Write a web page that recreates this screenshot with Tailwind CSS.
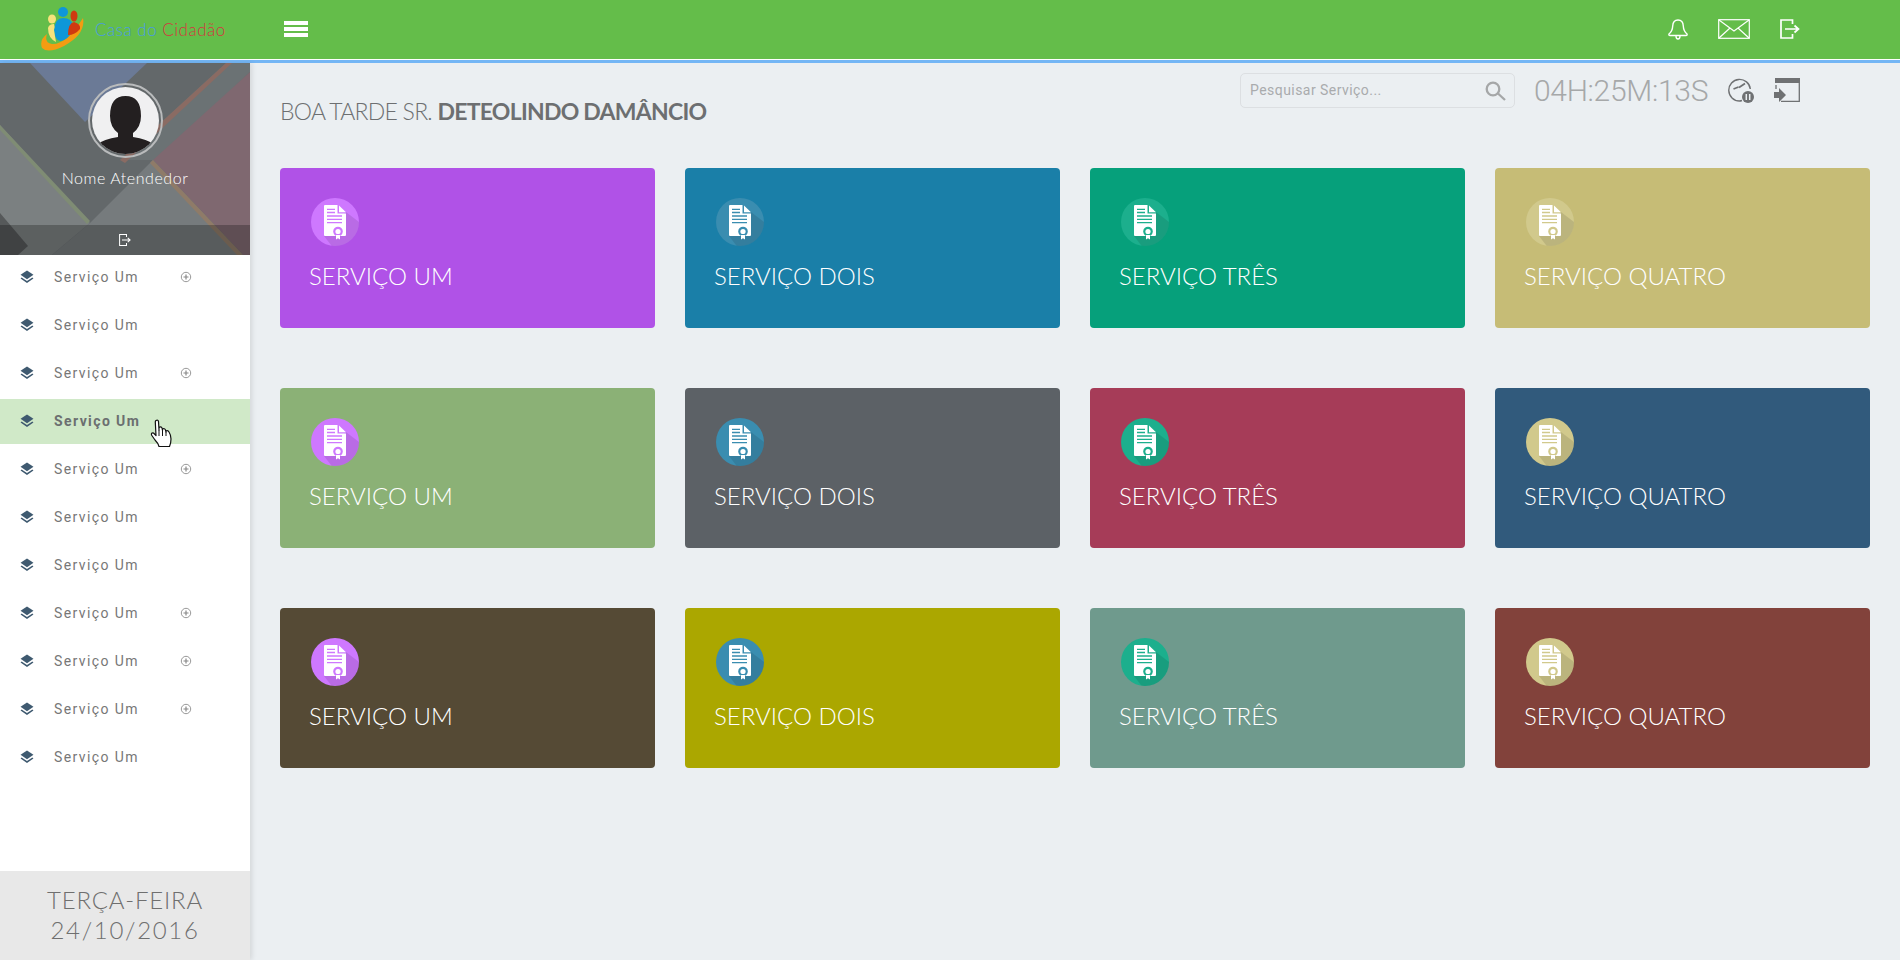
<!DOCTYPE html>
<html lang="pt-BR">
<head>
<meta charset="UTF-8">
<title>Casa do Cidadão</title>
<script src="https://cdn.jsdelivr.net/npm/@tailwindcss/browser@4"></script>
</head>
<body class="h-screen overflow-hidden bg-[#ebeff2] font-['Lato',sans-serif] text-[#6d6f71]">

<!-- symbols -->
<svg class="absolute w-0 h-0">
  <defs>
    <clipPath id="circle-clip"><circle cx="24" cy="24" r="24"/></clipPath>
  </defs>
  <symbol id="doc" viewBox="0 0 48 48">
    <circle cx="24" cy="24" r="24" fill="currentColor"/>
    <path clip-path="url(#circle-clip)" d="M35 14 L60 33 V60 H30 L13 38 Z" fill="#000" fill-opacity=".1"/>
    <path d="M14 7 H26.500 V15.500 H35 V37 Q35 38 34 38 H14 Q13 38 13 37 V8 Q13 7 14 7 Z" fill="#fff"/>
    <path d="M28 7.500 L35 14.300 H28 Z" fill="#fff"/>
    <path d="M16 11.300 H24 M16 14.500 H24 M16 18 H31 M16 21.300 H31 M16 24.700 H31" stroke="currentColor" stroke-width="1.300"/>
    <circle cx="27" cy="33.500" r="4.800" fill="currentColor"/>
    <circle cx="27" cy="33.500" r="2.600" fill="#fff"/>
    <path d="M25 37 H29 V41.500 L27 40.300 L25 41.500 Z" fill="#fff"/>
  </symbol>
  <symbol id="layers" viewBox="0.5 0.5 13 13">
    <path d="M7 1 L13 5 L7 9 L1 5 Z" fill="#3f5a70"/>
    <path d="M2 7.500 L1 8.300 L7 12.500 L13 8.300 L12 7.500 L7 10.800 Z" fill="#3f5a70"/>
  </symbol>
  <symbol id="plus" viewBox="0 0 12 12">
    <circle cx="6" cy="6" r="4.700" fill="none" stroke="#999" stroke-width="1"/>
    <path d="M3.500 6 H8.500 M6 3.500 V8.500" stroke="#888" stroke-width="1.200"/>
  </symbol>
  <symbol id="logout" viewBox="0 0 20 20">
    <path d="M12.500 5 V1 H1 V19 H12.500 V15" fill="none" stroke="currentColor" stroke-width="1.700"/>
    <path d="M5 10 H18 M14.500 6.500 L18.500 10 L14.500 13.500" fill="none" stroke="currentColor" stroke-width="1.700"/>
  </symbol>
</svg>

<!-- top bar -->
<header class="h-[63px] bg-[#64bd4a] border-b-[3px] border-[#74b6f5] shadow-[inset_0_-1px_0_#fff] flex items-center pb-[2px]">
  <div class="w-[284px] pl-[40px] flex items-center shrink-0">
    <svg class="w-[45px] h-[46px] shrink-0" viewBox="0 0 45 46">
      <path d="M43 12 Q46 28 24 40 Q8 48 2 42 Q-1 34 7 28 Q4 37 12 38 Q26 39 43 12 Z" fill="#f39c12"/>
      <circle cx="23" cy="6" r="5" fill="#0e97d8"/>
      <path d="M14 24 Q15 12 23 12 Q32 12 33 20 Q32 30 24 34 Q15 38 14 24 Z" fill="#0e97d8"/>
      <ellipse cx="12" cy="13" rx="4" ry="4.500" fill="#f7e27c"/>
      <path d="M8 22 Q9 18 14 18 Q15 20 14 24 L16 36 Q8 32 8 22 Z" fill="#f7e27c"/>
      <ellipse cx="34" cy="10" rx="3.500" ry="5.500" fill="#cf3a10"/>
      <path d="M28 29 Q28 17 34 16 Q41 18 40 23 Q35 29 28 29 Z" fill="#cf3a10"/>
    </svg>
    <span class="ml-[10px] text-[17px] leading-none font-light tracking-[.5px] whitespace-nowrap"><span class="text-[#4a9ae0]">Casa do</span> <span class="text-[#d5343f]">Cidadão</span></span>
  </div>
  <div class="w-[24px] flex flex-col gap-[2px]">
    <div class="h-[4px] bg-white"></div>
    <div class="h-[4px] bg-white"></div>
    <div class="h-[4px] bg-white"></div>
  </div>
  <div class="ml-auto mr-[100px] flex items-center gap-[30px] text-white">
    <svg class="w-[20px] h-[21px]" viewBox="0 0 20 21" fill="none" stroke="currentColor" stroke-width="1.400">
      <path d="M10 1 Q15 1 15.300 7 Q15.500 12 19 15 Q19.500 16.500 18 16.500 H2 Q.5 16.500 1 15 Q4.500 12 4.700 7 Q5 1 10 1 Z"/>
      <path d="M8 17 Q8 20 10 20 Q12 20 12 17"/>
    </svg>
    <svg class="w-[32px] h-[20px]" viewBox="0 0 32 20" fill="none" stroke="currentColor" stroke-width="1.200">
      <rect x=".7" y=".7" width="30.600" height="18.600"/>
      <path d="M1 1 L16 12 L31 1 M1 19 L12 9 M31 19 L20 9"/>
    </svg>
    <svg class="w-[20px] h-[20px]"><use href="#logout"/></svg>
  </div>
</header>

<div class="flex h-[897px]">
  <!-- sidebar -->
  <aside class="relative w-[250px] shrink-0 bg-white flex flex-col shadow-[2px_0_5px_rgba(0,0,0,.1)]">
    <div class="relative h-[192px] overflow-hidden">
      <svg class="absolute inset-0 w-[250px] h-[192px]" viewBox="0 0 250 192">
        <rect width="250" height="192" fill="#63686a"/>
        <path d="M30 0 H147 L85 59 Z" fill="#6b7a96"/>
        <path d="M226 0 H250 V9 L158 97 L120 97 Z" fill="#6b7274"/>
        <path d="M226 0 L120 97 L125 100 L232 0 Z" fill="#8a6b63"/>
        <path d="M250 9 V192 H243 L153 97 Z" fill="#7f6870"/>
        <path d="M0 62 L90 160 L52 192 H0 Z" fill="#7b8081"/>
        <path d="M90 160 L153 97 L243 192 H52 Z" fill="#767b7d"/>
        <path d="M0 62 L90 158 L87 161 L0 67 Z" fill="#7f8c74"/>
        <path d="M153 97 L243 192 H237 L150 100 Z" fill="#8f7b68"/>
        <path d="M0 150 L28 183 L18 192 H0 Z" fill="#56595a"/>
      </svg>
      <div class="relative flex flex-col items-center pt-[20px]">
        <div class="w-[75px] h-[75px] rounded-full border-[2px] border-[#b9bbbc] p-[2px]">
          <svg class="w-full h-full rounded-full" viewBox="0 0 67 67">
            <rect width="67" height="67" fill="#f0f0f1"/>
            <path d="M33.500 9 Q49 9 49 29 Q49 40 41 46 L41 50 Q55 52 63 58 L63 67 H4 L4 58 Q12 52 26 50 L26 46 Q18 40 18 29 Q18 9 33.500 9 Z" fill="#231f20"/>
          </svg>
        </div>
        <p class="mt-[8px] text-white text-[16px] leading-[24px] font-light tracking-[.55px]">Nome Atendedor</p>
      </div>
      <div class="absolute bottom-0 inset-x-0 h-[30px] bg-black/25 flex items-center justify-center text-white">
        <svg class="w-[12px] h-[12px]"><use href="#logout"/></svg>
      </div>
    </div>

    <nav class="-mt-[2px] font-['Roboto',sans-serif] text-[14px] tracking-[1.400px] text-[#777]">
      <div class="h-[48px] flex items-center pl-[20px]"><svg class="w-[14px] h-[14px]"><use href="#layers"/></svg><span class="ml-[20px] w-[126px]">Serviço Um</span><svg class="w-[12px] h-[12px]"><use href="#plus"/></svg></div>
      <div class="h-[48px] flex items-center pl-[20px]"><svg class="w-[14px] h-[14px]"><use href="#layers"/></svg><span class="ml-[20px] w-[126px]">Serviço Um</span></div>
      <div class="h-[48px] flex items-center pl-[20px]"><svg class="w-[14px] h-[14px]"><use href="#layers"/></svg><span class="ml-[20px] w-[126px]">Serviço Um</span><svg class="w-[12px] h-[12px]"><use href="#plus"/></svg></div>
      <div class="h-[48px] flex items-center pl-[20px]"><div class="h-[45px] w-[250px] -ml-[20px] pl-[20px] bg-[#d0e9c8] flex items-center font-bold text-[#6b6f70]"><svg class="w-[14px] h-[14px]"><use href="#layers"/></svg><span class="ml-[20px]">Serviço Um</span></div></div>
      <div class="h-[48px] flex items-center pl-[20px]"><svg class="w-[14px] h-[14px]"><use href="#layers"/></svg><span class="ml-[20px] w-[126px]">Serviço Um</span><svg class="w-[12px] h-[12px]"><use href="#plus"/></svg></div>
      <div class="h-[48px] flex items-center pl-[20px]"><svg class="w-[14px] h-[14px]"><use href="#layers"/></svg><span class="ml-[20px] w-[126px]">Serviço Um</span></div>
      <div class="h-[48px] flex items-center pl-[20px]"><svg class="w-[14px] h-[14px]"><use href="#layers"/></svg><span class="ml-[20px] w-[126px]">Serviço Um</span></div>
      <div class="h-[48px] flex items-center pl-[20px]"><svg class="w-[14px] h-[14px]"><use href="#layers"/></svg><span class="ml-[20px] w-[126px]">Serviço Um</span><svg class="w-[12px] h-[12px]"><use href="#plus"/></svg></div>
      <div class="h-[48px] flex items-center pl-[20px]"><svg class="w-[14px] h-[14px]"><use href="#layers"/></svg><span class="ml-[20px] w-[126px]">Serviço Um</span><svg class="w-[12px] h-[12px]"><use href="#plus"/></svg></div>
      <div class="h-[48px] flex items-center pl-[20px]"><svg class="w-[14px] h-[14px]"><use href="#layers"/></svg><span class="ml-[20px] w-[126px]">Serviço Um</span><svg class="w-[12px] h-[12px]"><use href="#plus"/></svg></div>
      <div class="h-[48px] flex items-center pl-[20px]"><svg class="w-[14px] h-[14px]"><use href="#layers"/></svg><span class="ml-[20px] w-[126px]">Serviço Um</span></div>
    </nav>

    <!-- hand cursor -->
    <svg class="absolute left-[150px] top-[356px] w-[23px] h-[29px]" viewBox="0 0 23 29">
      <path d="M6 1.500 Q8 .5 8.500 2.500 L9 11 V8.500 Q11 7 12 9 L12.500 11.500 V10 Q14.500 9 15.500 11 L16 13 V12 Q18 11 19 13 Q21 16 21 20 Q21 24 19.500 27.500 H9 Q8 24 5 21 L1.500 16 Q1 13.500 3.500 14 L6 16.500 L5.300 3 Q5.300 2 6 1.500 Z" fill="#fff" stroke="#111" stroke-width="1.200" stroke-linejoin="round"/>
      <path d="M9 11 V17 M12.500 11.500 V17 M16 13 V17" stroke="#111" stroke-width="1"/>
    </svg>

    <div class="mt-auto h-[89px] bg-[#e8e8e8] pt-[14px] text-center text-[24px] leading-[30px] font-light text-[#6f6f6f]">
      <p class="tracking-[.8px]">TERÇA-FEIRA</p>
      <p class="tracking-[1.700px]">24/10/2016</p>
    </div>
  </aside>

  <!-- content -->
  <main class="flex-1 pl-[30px] pr-[30px] pt-[10px]">
    <div class="h-[95px] flex items-start justify-between">
      <h1 class="mt-[22px] text-[23px] leading-[32px] font-light tracking-[-.75px] text-[#6d6f71]">BOA TARDE SR. <strong class="font-bold">DETEOLINDO DAMÂNCIO</strong></h1>
      <div class="mr-[70px] flex items-center">
        <div class="w-[275px] h-[35px] border border-[#dcdfe2] rounded-[5px] pl-[9px] pr-[8px] flex items-center justify-between font-['Roboto',sans-serif] text-[14px] tracking-[.45px] text-[#a9abad]">
          <span>Pesquisar Serviço...</span>
          <svg class="w-[21px] h-[20px]" viewBox="0 0 21 20" fill="none" stroke="#a5a7a8" stroke-width="2.300">
            <circle cx="8" cy="8" r="6.300"/>
            <path d="M13 12.500 L20 19"/>
          </svg>
        </div>
        <span class="ml-[19px] w-[175px] whitespace-nowrap font-['Roboto',sans-serif] font-light text-[30px] leading-[35px] tracking-[-.3px] text-[#a6a8a9]">04H:25M:13S</span>
        <svg class="ml-[19px] w-[26px] h-[25px]" viewBox="0 0 26 25" fill="none" stroke="#6f7173" stroke-width="1.400">
          <path d="M14 22.500 Q12.500 23 11.500 23 A10.800 10.800 0 1 1 22.300 11"/>
          <path d="M5.500 11 L10.500 9 M11 9.500 L17 5.500" stroke-width="1.800"/>
          <circle cx="20" cy="19" r="6" fill="#6f7173" stroke="none"/>
          <path d="M18.300 16 V22 M21.700 16 V22" stroke="#ebeff2" stroke-width="1.500"/>
        </svg>
        <svg class="ml-[20px] w-[26px] h-[25px]" viewBox="0 0 26 25" fill="none">
          <path d="M2 1 H25.300 V23.300 H7" stroke="#6f7173" stroke-width="1.300"/>
          <rect x="1" y="0" width="25" height="5" fill="#6f7173"/>
          <path d="M2 7 V11" stroke="#6f7173" stroke-width="1.300"/>
          <path d="M0 14 H5 V10 L12 17 L5 24 V20 H0 Z" fill="#6f7173"/>
        </svg>
      </div>
    </div>

    <section class="grid grid-cols-4 gap-x-[30px] gap-y-[60px] text-white">
      <a class="h-[160px] rounded-[4px] bg-[#b052e7] pl-[29px] pt-[30px] block"><svg class="w-[48px] h-[48px] ml-[2px] text-[#ce78ff]"><use href="#doc"/></svg><span class="mt-[12px] block text-[24px] leading-[36px] font-light">SERVIÇO UM</span></a>
      <a class="h-[160px] rounded-[4px] bg-[#1a7fa8] pl-[29px] pt-[30px] block"><svg class="w-[48px] h-[48px] ml-[2px] text-[#3a8db0]"><use href="#doc"/></svg><span class="mt-[12px] block text-[24px] leading-[36px] font-light">SERVIÇO DOIS</span></a>
      <a class="h-[160px] rounded-[4px] bg-[#06a07b] pl-[29px] pt-[30px] block"><svg class="w-[48px] h-[48px] ml-[2px] text-[#1caf8d]"><use href="#doc"/></svg><span class="mt-[12px] block text-[24px] leading-[36px] font-light">SERVIÇO TRÊS</span></a>
      <a class="h-[160px] rounded-[4px] bg-[#c6bc76] pl-[29px] pt-[30px] block"><svg class="w-[48px] h-[48px] ml-[2px] text-[#d1c98c]"><use href="#doc"/></svg><span class="mt-[12px] block text-[24px] leading-[36px] font-light">SERVIÇO QUATRO</span></a>

      <a class="h-[160px] rounded-[4px] bg-[#8bb176] pl-[29px] pt-[30px] block"><svg class="w-[48px] h-[48px] ml-[2px] text-[#ce78ff]"><use href="#doc"/></svg><span class="mt-[12px] block text-[24px] leading-[36px] font-light">SERVIÇO UM</span></a>
      <a class="h-[160px] rounded-[4px] bg-[#5c6166] pl-[29px] pt-[30px] block"><svg class="w-[48px] h-[48px] ml-[2px] text-[#3a8db0]"><use href="#doc"/></svg><span class="mt-[12px] block text-[24px] leading-[36px] font-light">SERVIÇO DOIS</span></a>
      <a class="h-[160px] rounded-[4px] bg-[#a63c58] pl-[29px] pt-[30px] block"><svg class="w-[48px] h-[48px] ml-[2px] text-[#1caf8d]"><use href="#doc"/></svg><span class="mt-[12px] block text-[24px] leading-[36px] font-light">SERVIÇO TRÊS</span></a>
      <a class="h-[160px] rounded-[4px] bg-[#315a7c] pl-[29px] pt-[30px] block"><svg class="w-[48px] h-[48px] ml-[2px] text-[#d1c98c]"><use href="#doc"/></svg><span class="mt-[12px] block text-[24px] leading-[36px] font-light">SERVIÇO QUATRO</span></a>

      <a class="h-[160px] rounded-[4px] bg-[#554a35] pl-[29px] pt-[30px] block"><svg class="w-[48px] h-[48px] ml-[2px] text-[#ce78ff]"><use href="#doc"/></svg><span class="mt-[12px] block text-[24px] leading-[36px] font-light">SERVIÇO UM</span></a>
      <a class="h-[160px] rounded-[4px] bg-[#aba700] pl-[29px] pt-[30px] block"><svg class="w-[48px] h-[48px] ml-[2px] text-[#3a8db0]"><use href="#doc"/></svg><span class="mt-[12px] block text-[24px] leading-[36px] font-light">SERVIÇO DOIS</span></a>
      <a class="h-[160px] rounded-[4px] bg-[#6f9a8d] pl-[29px] pt-[30px] block"><svg class="w-[48px] h-[48px] ml-[2px] text-[#1caf8d]"><use href="#doc"/></svg><span class="mt-[12px] block text-[24px] leading-[36px] font-light">SERVIÇO TRÊS</span></a>
      <a class="h-[160px] rounded-[4px] bg-[#82423b] pl-[29px] pt-[30px] block"><svg class="w-[48px] h-[48px] ml-[2px] text-[#d1c98c]"><use href="#doc"/></svg><span class="mt-[12px] block text-[24px] leading-[36px] font-light">SERVIÇO QUATRO</span></a>
    </section>
  </main>
</div>

</body>
</html>
